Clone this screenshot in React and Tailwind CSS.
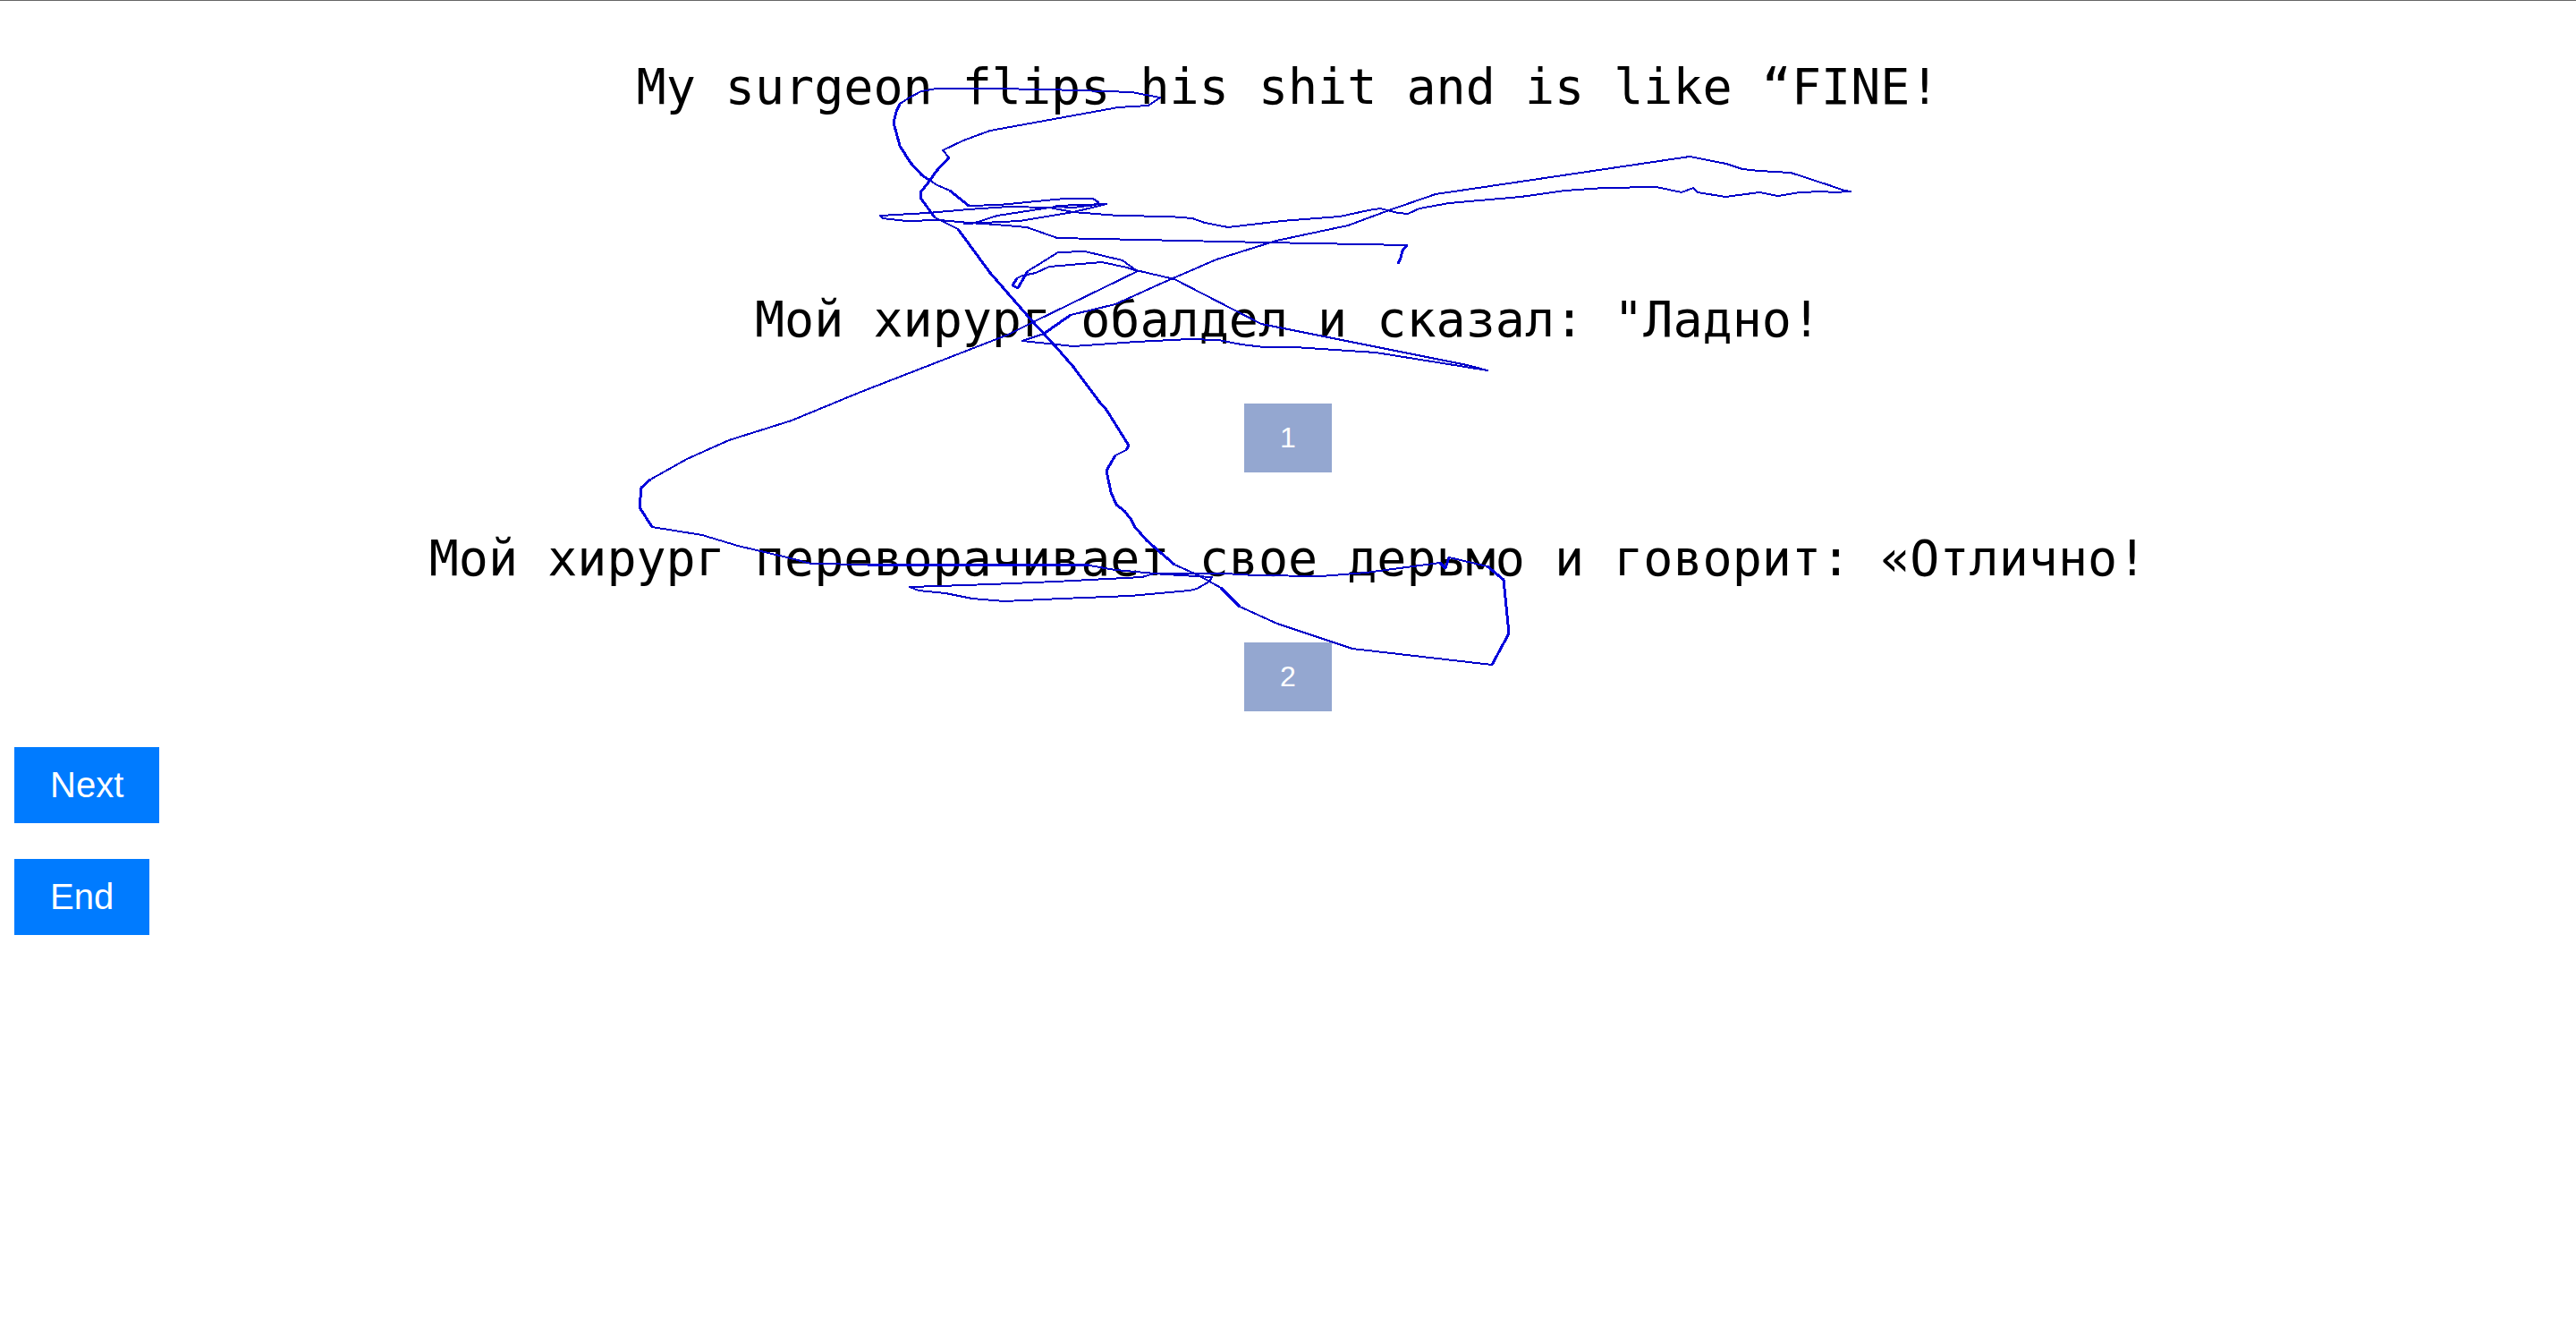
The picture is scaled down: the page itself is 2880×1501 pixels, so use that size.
import React from "react";

// The pointer trail, in drawing order.
const TRAIL = [
  "1563,295 1566,288 1568,280 1573,274 1415,271 1182,266 1148,254 1113,251 1083,249 1050,246 1013,247 987,244 984,241",
  "1037,238 1083,234 1127,231 1173,232 1200,237 1250,241 1307,242 1333,244 1347,249 1373,254 1433,247 1498,242 1530,235 1543,233",
  "1563,238 1574,239 1587,233 1620,227 1700,220 1750,213 1793,210 1852,209 1880,215 1893,210 1898,215 1929,220 1967,215",
  "1988,219 2012,215 2038,214 2050,215 2069,214 2062,213 2045,207 2002,193 1967,191 1948,189 1930,183 1889,175 1700,203",
  "1605,217 1553,235 1507,252 1427,269 1360,290 1300,316 1247,340 1197,352 1167,373 1143,381 1200,387 1270,382 1330,379",
  "1362,380 1388,385 1413,388 1447,388 1538,394 1663,414 1640,408 1410,362 1313,312 1270,302 1255,291 1213,281 1183,282",
  "1167,292 1149,303 1138,322 1132,319 1137,311 1143,308 1158,305 1173,298 1232,293 1260,299 1272,303 1155,360 1127,374",
  "960,439 885,470 815,492 768,513 727,536 717,545 715,567 729,589 785,598 825,610 880,623 907,630 970,631 1218,632",
  "1247,637 1303,642 1355,645 1352,650 1338,658 1330,660 1263,666 1187,669 1123,672 1087,669 1057,663 1027,660 1017,656",
  "1050,655 1107,653 1180,650 1277,645 1290,641 1370,641 1403,643 1477,644 1527,640 1610,629 1616,635 1620,623 1663,633",
  "1681,648 1687,708 1668,743 1512,725 1428,697 1386,678 1365,657 1340,643 1313,631 1282,604 1268,588 1265,581 1257,571",
  "1248,564 1242,550 1237,526 1247,509 1259,503 1262,498 1237,458 1229,449 1200,410 1180,387 1155,360 1107,305 1071,256",
  "1045,243 1029,221 1029,215 1038,204 1047,191 1061,176 1054,168 1077,157 1107,146 1250,120 1284,118 1297,109 1265,103",
  "1237,102 1170,100 1107,99 1047,99 1030,102 1017,109 1006,116 1002,125 999,137 1006,163 1018,182 1031,196 1040,202",
  "1048,207 1062,213 1083,230 1117,229 1190,222 1222,222 1228,226 1225,229 1200,232 1180,231 1115,241 1090,249 1078,250",
  "1140,247 1200,237 1225,231 1237,228 1180,230",
].join(" ");

// Stretches where the trail runs heavier.
const HEAVY = [
  "1229,449 1200,410 1180,387 1155,360 1107,305 1071,256",
  "1045,243 1029,221 1029,215 1038,204 1047,191 1061,176",
  "1006,116 1002,125 999,137 1006,163 1018,182 1031,196 1040,202",
  "1062,213 1083,230",
  "1386,678 1365,657",
  "1313,631 1282,604 1268,588 1265,581 1257,571 1248,564 1242,550 1237,526",
  "1247,509 1237,526",
  "1259,503 1262,498 1237,458 1229,449",
  "727,536 717,545 715,567 729,589",
  "970,631 1218,632",
  "1663,633 1681,648 1687,708 1668,743",
  "1197,352 1167,373",
  "1149,303 1138,322 1132,319 1137,311",
  "1563,295 1566,288 1568,280 1573,274",
  "1610,629 1616,635 1620,623",
];

function Phrase({ children }) {
  return (
    <p className="text-center font-['DejaVu_Sans_Mono',monospace] text-[55px] leading-[70px] text-black">
      {children}
    </p>
  );
}

function RankButton({ children }) {
  return (
    <button
      type="button"
      className="mt-[59px] self-center bg-[#94a7d0] px-10 py-5 text-[32px] leading-[37px] text-white"
    >
      {children}
    </button>
  );
}

function ActionButton({ children }) {
  return (
    <button
      type="button"
      className="mt-10 self-start bg-[#007bff] px-10 py-5 text-[40px] leading-[45px] text-white"
    >
      {children}
    </button>
  );
}

function Trail() {
  return (
    <svg
      aria-hidden="true"
      viewBox="0 0 2880 820"
      className="pointer-events-none absolute -top-px left-0 w-full"
      fill="none"
      shapeRendering="crispEdges"
      strokeLinejoin="round"
    >
      <polyline points={TRAIL} stroke="#0000c8" strokeWidth="2" />
      {HEAVY.map((points) => (
        <polyline key={points} points={points} stroke="#0000dc" strokeWidth="3" />
      ))}
    </svg>
  );
}

export default function App() {
  return (
    <main className="relative flex min-h-screen flex-col border-t border-[#666666] bg-white px-4 pt-[61px] font-['Liberation_Sans',sans-serif]">
      <Phrase>My surgeon flips his shit and is like “FINE!</Phrase>
      <section className="mt-[190px] flex flex-col">
        <Phrase>Мой хирург обалдел и сказал: "Ладно!</Phrase>
        <RankButton>1</RankButton>
      </section>
      <section className="mt-[61px] flex flex-col">
        <Phrase>Мой хирург переворачивает свое дерьмо и говорит: «Отлично!</Phrase>
        <RankButton>2</RankButton>
      </section>
      <ActionButton>Next</ActionButton>
      <ActionButton>End</ActionButton>
      <Trail />
    </main>
  );
}
